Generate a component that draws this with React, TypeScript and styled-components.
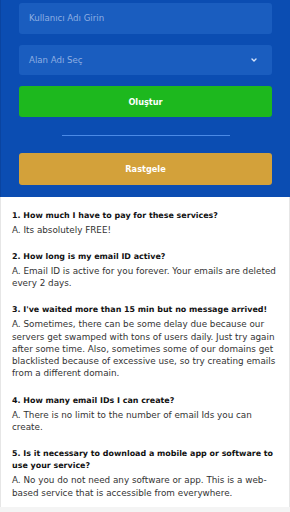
import React from 'react'
import styled, { createGlobalStyle } from 'styled-components'
import { ChevronDown } from 'lucide-react'

const GlobalStyle = createGlobalStyle`
  html, body {
    margin: 0;
    padding: 0;
    background: #f4f4f4;
    font-family: 'DejaVu Sans', 'Noto Sans', sans-serif;
  }
`

interface Faq {
  q: string
  a: string
}

const faqs: Faq[] = [
  { q: '1. How much I have to pay for these services?', a: 'A. Its absolutely FREE!' },
  {
    q: '2. How long is my email ID active?',
    a: 'A. Email ID is active for you forever. Your emails are deleted every 2 days.',
  },
  {
    q: "3. I've waited more than 15 min but no message arrived!",
    a: 'A. Sometimes, there can be some delay due because our servers get swamped with tons of users daily. Just try again after some time. Also, sometimes some of our domains get blacklisted because of excessive use, so try creating emails from a different domain.',
  },
  {
    q: '4. How many email IDs I can create?',
    a: 'A. There is no limit to the number of email Ids you can create.',
  },
  {
    q: '5. Is it necessary to download a mobile app or software to use your service?',
    a: 'A. No you do not need any software or app. This is a web-based service that is accessible from everywhere.',
  },
]

const Page = styled.div`
  width: 290px;
  display: flex;
  flex-direction: column;
`

const Hero = styled.section`
  background: #0b4db2;
  border-left: 1px solid #0a44a0;
  padding: 3px 18px 12px 18px;
  display: flex;
  flex-direction: column;
`

const Field = styled.div`
  height: 30.5px;
  border-radius: 3px;
  background: #1a5dbf;
  display: flex;
  align-items: center;
  justify-content: space-between;
  padding: 0 14px 0 10px;
  color: #8eaee2;
  font-size: 8.6px;
  & + & {
    margin-top: 11px;
  }
`

const Chevron = styled(ChevronDown)`
  color: #d6e4fb;
`

const Button = styled.button<{ $bg: string }>`
  height: 32px;
  border: none;
  border-radius: 3px;
  background: ${p => p.$bg};
  color: #fff;
  font-family: inherit;
  font-weight: 700;
  font-size: 8.2px;
  cursor: pointer;
`

const CreateButton = styled(Button)`
  margin-top: 11px;
  height: 31px;
`

const Divider = styled.hr`
  width: 168px;
  margin: 17.5px auto 17.5px;
  border: none;
  height: 1px;
  background: #4b8ae6;
`

const FaqList = styled.section`
  background: #fff;
  border-left: 1px solid #e6e6e6;
  border-right: 1px solid #e6e6e6;
  padding: 13px 11px 8px 11px;
  color: #222;
  font-size: 8.8px;
  line-height: 12.3px;
`

const Item = styled.div`
  & + & {
    margin-top: 15px;
  }
`

const Question = styled.div`
  font-weight: 700;
  font-size: 7.95px;
  color: #111;
  margin-bottom: 1.5px;
`

const Answer = styled.div`
  color: #333;
`

export default function App() {
  return (
    <Page>
      <GlobalStyle />
      <Hero>
        <Field>Kullanıcı Adı Girin</Field>
        <Field>
          <span>Alan Adı Seç</span>
          <Chevron size={8} strokeWidth={4} />
        </Field>
        <CreateButton $bg="#1db81e">Oluştur</CreateButton>
        <Divider />
        <Button $bg="#d3a13a">Rastgele</Button>
      </Hero>
      <FaqList>
        {faqs.map((item, index) => (
          <Item key={index}>
            <Question>{item.q}</Question>
            <Answer>{item.a}</Answer>
          </Item>
        ))}
      </FaqList>
    </Page>
  )
}
